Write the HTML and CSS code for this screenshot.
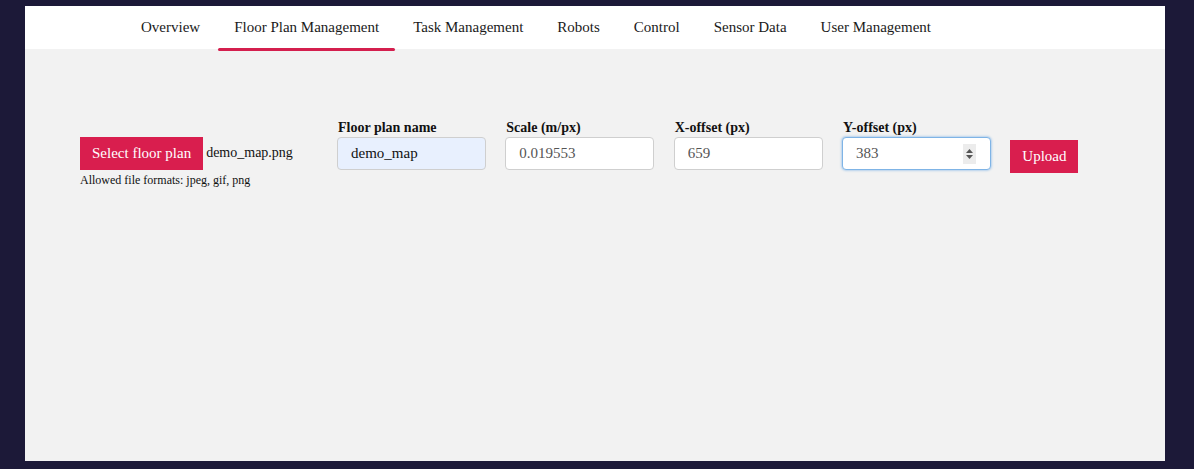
FILE: index.html
```html
<!DOCTYPE html>
<html>
<head>
<meta charset="utf-8">
<link rel="stylesheet" href="styles.css">
</head>
<body>
<div class="panel">
  <nav class="nav">
    <a class="tab">Overview</a>
    <a class="tab active">Floor Plan Management</a>
    <a class="tab">Task Management</a>
    <a class="tab">Robots</a>
    <a class="tab">Control</a>
    <a class="tab">Sensor Data</a>
    <a class="tab">User Management</a>
  </nav>
  <main class="content">
    <div class="form-row">
      <div class="file-group">
        <div class="file-line">
          <button class="btn">Select floor plan</button>
          <span class="file-name">demo_map.png</span>
        </div>
        <div class="hint">Allowed file formats: jpeg, gif, png</div>
      </div>
      <div class="field">
        <label class="label">Floor plan name</label>
        <input class="input autofill" type="text" value="demo_map">
      </div>
      <div class="field">
        <label class="label">Scale (m/px)</label>
        <input class="input muted" type="text" value="0.019553">
      </div>
      <div class="field">
        <label class="label">X-offset (px)</label>
        <input class="input muted" type="text" value="659">
      </div>
      <div class="field">
        <label class="label">Y-offset (px)</label>
        <div class="input-wrap">
          <input class="input muted focus" type="text" value="383">
          <span class="spinner">
            <svg width="13" height="20" viewBox="0 0 13 20"><path d="M6.5 5 L10 9 L3 9 Z M6.5 15 L10 11 L3 11 Z" fill="#555"/></svg>
          </span>
        </div>
      </div>
      <button class="btn upload">Upload</button>
    </div>
  </main>
</div>
</body>
</html>
```
FILE: styles.css
```css
html, body {
  margin: 0;
  padding: 0;
}
body {
  background: #1c1938;
  font-family: "Liberation Serif", serif;
  color: #111;
  padding: 6px 29px 8px 25px;
  height: 469px;
  box-sizing: border-box;
}
.panel {
  width: 1140px;
  height: 455px;
  background: #f2f2f2;
  display: flex;
  flex-direction: column;
}
.nav {
  height: 43px;
  background: #fff;
  display: flex;
  align-items: stretch;
  padding-left: 100px;
  gap: 2px;
}
.tab {
  position: relative;
  display: flex;
  align-items: center;
  padding: 0 16px 1px 16px;
  font-size: 15px;
  color: #1a1a1a;
}
.tab.active::after {
  content: "";
  position: absolute;
  left: 0;
  right: 0;
  bottom: -2px;
  height: 3px;
  border-radius: 2px;
  background: #d41f4e;
}
.content {
  padding: 70px 0 0 55px;
}
.form-row {
  display: flex;
  align-items: flex-start;
}
.file-group {
  padding-top: 18px;
  width: 257px;
}
.file-line {
  display: flex;
  align-items: center;
}
.btn {
  background: #d91e4e;
  color: #fff;
  border: none;
  font-family: inherit;
  font-size: 15px;
  height: 33px;
  padding: 0 12px;
  cursor: pointer;
}
.file-name {
  font-size: 14px;
  margin-left: 3px;
  padding-bottom: 1px;
}
.hint {
  font-size: 12px;
  margin-top: 3px;
}
.field {
  display: flex;
  flex-direction: column;
  margin-right: 19.33px;
}
.label {
  font-weight: bold;
  font-size: 14px;
  margin-left: 1px;
  height: 18px;
  line-height: 18px;
}
.input-wrap {
  position: relative;
}
.input {
  width: 149px;
  height: 33px;
  box-sizing: border-box;
  border: 1px solid #cfcfcf;
  border-radius: 4px;
  background: #fff;
  padding: 0 13px;
  font-family: inherit;
  font-size: 15px;
  color: #222;
  outline: none;
}
.input.autofill {
  background: #e8f0fe;
  color: #111;
}
.input.muted {
  color: #555;
}
.input.focus {
  border-color: #7fb4e6;
  box-shadow: 0 0 2px 1px rgba(110, 170, 230, 0.45);
}
.spinner {
  position: absolute;
  right: 15px;
  top: 7px;
  width: 13px;
  height: 20px;
  background: #ececec;
  display: block;
}
.spinner svg {
  display: block;
}
.upload {
  margin-top: 3px;
  padding: 0 12px;
  align-self: flex-start;
  margin-top: 21px;
}
```
